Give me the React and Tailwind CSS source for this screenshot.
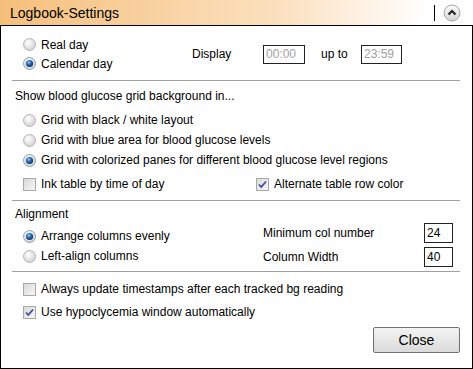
import React from 'react';

const Radio = ({ checked }) => (
    <svg width="13" height="13" viewBox="0 0 13 13" className="shrink-0">
        <defs>
            <radialGradient id="rg" cx="40%" cy="35%" r="70%">
                <stop offset="0%" stopColor="#ffffff" />
                <stop offset="100%" stopColor="#cfcfcf" />
            </radialGradient>
            <radialGradient id="rd" cx="40%" cy="35%" r="70%">
                <stop offset="0%" stopColor="#9cc8f0" />
                <stop offset="45%" stopColor="#2b6cb0" />
                <stop offset="100%" stopColor="#0b2d57" />
            </radialGradient>
        </defs>
        <circle cx="6.5" cy="6.5" r="6" fill="url(#rg)" stroke={checked ? '#8fa3b8' : '#b4b4b4'} strokeWidth="1" />
        {checked && <circle cx="6.5" cy="6.5" r="3.6" fill="url(#rd)" />}
    </svg>
);

const Check = ({ checked }) => (
    <svg width="13" height="13" viewBox="0 0 13 13" className="shrink-0">
        <defs>
            <linearGradient id="cg" x1="0" y1="0" x2="1" y2="1">
                <stop offset="0%" stopColor="#d9d9d9" />
                <stop offset="100%" stopColor="#f7f7f7" />
            </linearGradient>
        </defs>
        <rect x="0.5" y="0.5" width="12" height="12" fill="url(#cg)" stroke="#a8a8a8" />
        {checked && (
            <path d="M3 6.5 L5.3 9 L10 3.5" fill="none" stroke="#3c4d9a" strokeWidth="1.8" />
        )}
    </svg>
);

const RadioRow = ({ checked, children }) => (
    <div className="h-[20px] flex items-center gap-[5px]">
        <Radio checked={checked} />
        <span>{children}</span>
    </div>
);

const CheckRow = ({ checked, children }) => (
    <div className="h-[20px] flex items-center gap-[5px]">
        <Check checked={checked} />
        <span>{children}</span>
    </div>
);

const Sep = () => <div className="ml-[11px] w-[448px] h-px bg-[#a0a0a0]" />;

export default function App() {
    return (
        <div
            className="w-[473px] h-[369px] flex flex-col text-[12px] text-black leading-none"
            style={{ fontFamily: '"Liberation Sans", Arial, sans-serif' }}
        >
            {/* Title bar */}
            <div className="h-[26px] shrink-0 flex items-center border-b border-black bg-gradient-to-r from-[#f5bf7b] via-[#fbe1c0] via-60% to-white to-90%">
                <span className="ml-[10px] text-[14px] flex-1">Logbook-Settings</span>
                <div className="w-px h-[16px] bg-black mr-[8px]" />
                <svg width="18" height="18" viewBox="0 0 18 18" className="mr-[12px]">
                    <defs>
                        <linearGradient id="bg" x1="0" y1="0" x2="0" y2="1">
                            <stop offset="0%" stopColor="#fbfbfb" />
                            <stop offset="100%" stopColor="#d2d2d2" />
                        </linearGradient>
                    </defs>
                    <circle cx="9" cy="9" r="8" fill="url(#bg)" stroke="#a9a9a9" />
                    <path d="M5.5 10.5 L9 7 L12.5 10.5" fill="none" stroke="#222" strokeWidth="2" />
                </svg>
            </div>

            {/* Body */}
            <div className="flex-1 flex flex-col bg-white border-l border-r border-b border-black">
                {/* Day type */}
                <div className="flex mt-[9px] h-[38px]">
                    <div className="w-[191px] pl-[22px] flex flex-col">
                        <div className="h-[19px] flex items-center gap-[5px]">
                            <Radio />
                            <span>Real day</span>
                        </div>
                        <div className="h-[19px] flex items-center gap-[5px]">
                            <Radio checked />
                            <span>Calendar day</span>
                        </div>
                    </div>
                    <div className="flex items-center">
                        <span className="w-[71px]">Display</span>
                        <div className="w-[42px] h-[19px] border border-[#222] flex items-center pl-[2px] text-[#a0a0a0]">00:00</div>
                        <span className="w-[56px] pl-[16px]">up to</span>
                        <div className="w-[41px] h-[19px] border border-[#222] flex items-center pl-[2px] text-[#a0a0a0]">23:59</div>
                    </div>
                </div>

                <div className="mt-[7px]"><Sep /></div>

                {/* Grid background */}
                <div className="mt-[5px] pl-[14px] h-[20px] flex items-center">Show blood glucose grid background in...</div>
                <div className="mt-[4px] pl-[22px] flex flex-col">
                    <RadioRow>Grid with black / white layout</RadioRow>
                    <RadioRow>Grid with blue area for blood glucose levels</RadioRow>
                    <RadioRow checked>Grid with colorized panes for different blood glucose level regions</RadioRow>
                </div>
                <div className="mt-[4px] flex">
                    <div className="w-[255px] pl-[22px]">
                        <CheckRow>Ink table by time of day</CheckRow>
                    </div>
                    <CheckRow checked>Alternate table row color</CheckRow>
                </div>

                <div className="mt-[6px]"><Sep /></div>

                {/* Alignment */}
                <div className="flex h-[66px]">
                    <div className="w-[262px] flex flex-col pt-[3px]">
                        <div className="pl-[14px] h-[20px] flex items-center">Alignment</div>
                        <div className="mt-[2px] pl-[22px]">
                            <RadioRow checked>Arrange columns evenly</RadioRow>
                            <RadioRow>Left-align columns</RadioRow>
                        </div>
                    </div>
                    <div className="flex flex-col pt-[22px] gap-[4px]">
                        <div className="h-[20px] flex items-center">
                            <span className="w-[161px]">Minimum col number</span>
                            <div className="w-[29px] h-[20px] border border-[#222] flex items-center pl-[2px]">24</div>
                        </div>
                        <div className="h-[20px] flex items-center">
                            <span className="w-[161px]">Column Width</span>
                            <div className="w-[29px] h-[20px] border border-[#222] flex items-center pl-[2px]">40</div>
                        </div>
                    </div>
                </div>

                <div className="mt-[4px]"><Sep /></div>

                {/* Misc */}
                <div className="mt-[7px] pl-[22px] flex flex-col gap-[3px]">
                    <CheckRow>Always update timestamps after each tracked bg reading</CheckRow>
                    <CheckRow checked>Use hypoclycemia window automatically</CheckRow>
                </div>

                <div className="mt-[5px] flex justify-end pr-[12px]">
                    <button className="w-[87px] h-[26px] border border-[#707070] rounded-[2px] bg-gradient-to-b from-[#f3f3f3] to-[#dadada] text-[14px] flex items-center justify-center">
                        Close
                    </button>
                </div>
            </div>
        </div>
    );
}
